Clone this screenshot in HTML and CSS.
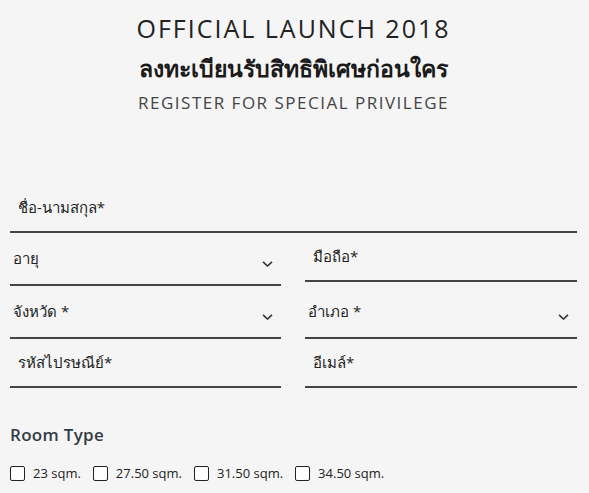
FILE: index.html
```html
<!DOCTYPE html>
<html lang="th">
<head>
    <meta charset="UTF-8">
    <meta name="viewport" content="width=device-width, initial-scale=1.0">
    <title>Official Launch 2018</title>
    <link rel="stylesheet" href="styles.css">
</head>
<body>
    <div class="page">
        <!-- หัวเรื่อง -->
        <div class="header">
            <h1 class="title">OFFICIAL LAUNCH 2018</h1>
            <h2 class="title-th">ลงทะเบียนรับสิทธิพิเศษก่อนใคร</h2>
            <p class="subtitle">REGISTER FOR SPECIAL PRIVILEGE</p>
        </div>

        <!-- ฟอร์มลงทะเบียน -->
        <form class="register-form">
            <div class="field field-input field-full">
                <span class="label">ชื่อ-นามสกุล*</span>
            </div>
            <div class="row">
                <div class="field field-select">
                    <span class="label">อายุ</span>
                    <svg class="chevron" width="11" height="6" viewBox="0 0 11 6"><path d="M1 0.8 L5.5 5 L10 0.8" fill="none" stroke="#333" stroke-width="1.6"/></svg>
                </div>
                <div class="field field-input">
                    <span class="label">มือถือ*</span>
                </div>
            </div>
            <div class="row">
                <div class="field field-select">
                    <span class="label">จังหวัด *</span>
                    <svg class="chevron" width="11" height="6" viewBox="0 0 11 6"><path d="M1 0.8 L5.5 5 L10 0.8" fill="none" stroke="#333" stroke-width="1.6"/></svg>
                </div>
                <div class="field field-select">
                    <span class="label">อำเภอ *</span>
                    <svg class="chevron" width="11" height="6" viewBox="0 0 11 6"><path d="M1 0.8 L5.5 5 L10 0.8" fill="none" stroke="#333" stroke-width="1.6"/></svg>
                </div>
            </div>
            <div class="row">
                <div class="field field-input">
                    <span class="label">รหัสไปรษณีย์*</span>
                </div>
                <div class="field field-input">
                    <span class="label">อีเมล์*</span>
                </div>
            </div>

            <h3 class="room-title">Room Type</h3>
            <div class="room-list">
                <label class="room"><span class="box"></span>23 sqm.</label>
                <label class="room"><span class="box"></span>27.50 sqm.</label>
                <label class="room"><span class="box"></span>31.50 sqm.</label>
                <label class="room"><span class="box"></span>34.50 sqm.</label>
            </div>
        </form>
    </div>
</body>
</html>
```

FILE: styles.css
```css
body {
    margin: 0;
    background-color: #f5f5f5;
    font-family: "Open Sans", "Noto Sans", sans-serif;
    color: #222;
}
.page {
    padding: 0 12px 0 10px;
}
.header {
    text-align: center;
    padding-top: 12px;
}
.title {
    margin: 0;
    font-size: 25px;
    font-weight: 400;
    line-height: 32px;
    letter-spacing: 2px;
    color: #222;
}
.title-th {
    margin: 9px 0 0;
    font-size: 23px;
    font-weight: 700;
    line-height: 30px;
    color: #1a1a1a;
}
.subtitle {
    margin: 8px 0 0;
    font-size: 17px;
    line-height: 24px;
    letter-spacing: 1.5px;
    color: #444;
}
.register-form {
    margin-top: 70px;
}
.row {
    display: grid;
    grid-template-columns: 271px 272px;
    column-gap: 24px;
    align-items: start;
}
.field {
    display: flex;
    align-items: center;
    justify-content: space-between;
    border-bottom: 2px solid #444;
    box-sizing: border-box;
    font-size: 15px;
}
.field-input {
    height: 49px;
    padding-left: 8px;
}
.field-full {
    height: 48px;
}
.field-select {
    height: 53px;
    padding-left: 3px;
    padding-right: 8px;
}
.chevron {
    margin-top: 10px;
}
.room-title {
    margin: 35px 0 0;
    font-size: 17px;
    font-weight: 600;
    color: #343b46;
    letter-spacing: 0.3px;
}
.room-list {
    display: flex;
    align-items: center;
    margin-top: 18px;
}
.room {
    display: flex;
    align-items: center;
    font-size: 13px;
    color: #222;
    margin-right: 12px;
}
.box {
    width: 13px;
    height: 13px;
    border: 1px solid #222;
    border-radius: 2px;
    background: #fff;
    margin-right: 8px;
}
```
